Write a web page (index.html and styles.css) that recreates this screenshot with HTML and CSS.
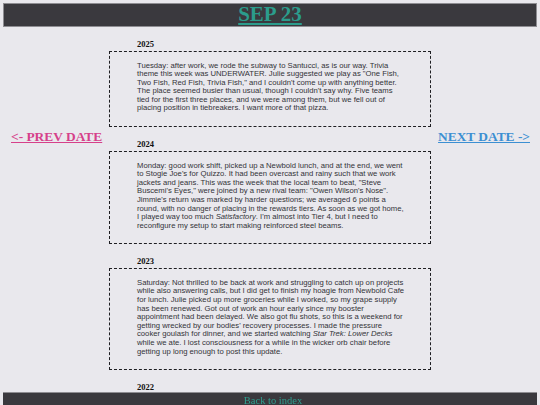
FILE: index.html
```html
<!DOCTYPE html>
<html lang="en">
<head>
<meta charset="utf-8">
<title>Sep 23</title>
<link rel="stylesheet" href="styles.css">
</head>
<body>
<header class="top-bar">
  <a class="day-title" href="#">SEP 23</a>
</header>

<div class="layout">
  <nav class="side side-prev">
    <a class="date-link prev" href="#">&lt;- PREV DATE</a>
  </nav>

  <main class="entries">
    <section class="entry">
      <h2 class="entry-year">2025</h2>
      <div class="entry-box">
        <p>Tuesday: after work, we rode the subway to Santucci, as is our way. Trivia theme this week was UNDERWATER. Julie suggested we play as "One Fish, Two Fish, Red Fish, Trivia Fish," and I couldn't come up with anything better. The place seemed busier than usual, though I couldn't say why. Five teams tied for the first three places, and we were among them, but we fell out of placing position in tiebreakers. I want more of that pizza.</p>
      </div>
    </section>

    <section class="entry">
      <h2 class="entry-year">2024</h2>
      <div class="entry-box">
        <p>Monday: good work shift, picked up a Newbold lunch, and at the end, we went to Stogie Joe's for Quizzo. It had been overcast and rainy such that we work jackets and jeans. This was the week that the local team to beat, "Steve Buscemi's Eyes," were joined by a new rival team: "Owen Wilson's Nose". Jimmie's return was marked by harder questions; we averaged 6 points a round, with no danger of placing in the rewards tiers. As soon as we got home, I played way too much <em>Satisfactory</em>. I'm almost into Tier 4, but I need to reconfigure my setup to start making reinforced steel beams.</p>
      </div>
    </section>

    <section class="entry">
      <h2 class="entry-year">2023</h2>
      <div class="entry-box">
        <p>Saturday: Not thrilled to be back at work and struggling to catch up on projects while also answering calls, but I did get to finish my hoagie from Newbold Cafe for lunch. Julie picked up more groceries while I worked, so my grape supply has been renewed. Got out of work an hour early since my booster appointment had been delayed. We also got flu shots, so this is a weekend for getting wrecked by our bodies' recovery processes. I made the pressure cooker goulash for dinner, and we started watching <em>Star Trek: Lower Decks</em> while we ate. I lost consciousness for a while in the wicker orb chair before getting up long enough to post this update.</p>
      </div>
    </section>

    <section class="entry">
      <h2 class="entry-year">2022</h2>
    </section>
  </main>

  <nav class="side side-next">
    <a class="date-link next" href="#">NEXT DATE -&gt;</a>
  </nav>
</div>

<footer class="bottom-bar">
  <a class="index-link" href="#">Back to index</a>
</footer>
</body>
</html>
```

FILE: styles.css
```css
html, body {
  background: #e9e8ed;
}

body {
  margin: 3px;
  font-family: "Liberation Serif", "Times New Roman", serif;
  color: #111;
}

/* title bar */
.top-bar {
  background: #3a393e;
  border: 1px solid #8e8d92;
  text-align: center;
  line-height: 21px;
}

.day-title {
  font-size: 21px;
  font-weight: bold;
  color: #2b9c8c;
}

/* three columns: prev link, entries, next link */
.layout {
  display: grid;
  grid-template-columns: 1fr 322px 1fr;
}

.side {
  padding-top: 100px;
}

.side-prev {
  padding-left: 8px;
}

.side-next {
  padding-right: 7px;
  text-align: right;
}

.date-link {
  font-size: 13.4px;
  font-weight: bold;
  line-height: 16px;
}

.date-link.prev {
  color: #d6408a;
}

.date-link.next {
  color: #3c8fd2;
}

.entries {
  padding-top: 12px;
}

.entry {
  margin-bottom: 12px;
}

.entry-year {
  margin: 0 0 2px;
  padding-left: 28px;
  font-size: 8.5px;
  line-height: 10px;
  font-weight: bold;
  color: #111;
}

.entry-box {
  border: 1px dashed #1e1e22;
  padding: 9.5px 25px 13px 27px;
}

.entry-box p {
  margin: 0;
  font-family: "Liberation Sans", Arial, sans-serif;
  font-size: 7.7px;
  line-height: 8.6px;
  color: #333338;
}

/* footer bar pinned to the bottom of the window */
.bottom-bar {
  position: fixed;
  left: 3px;
  right: 3px;
  bottom: 0;
  height: 12px;
  padding-left: 6px;
  background: #3a393e;
  border-top: 1px solid #8e8d92;
  text-align: center;
  line-height: 11px;
}

.index-link {
  font-size: 10.5px;
  color: #2f9e8e;
}
```
